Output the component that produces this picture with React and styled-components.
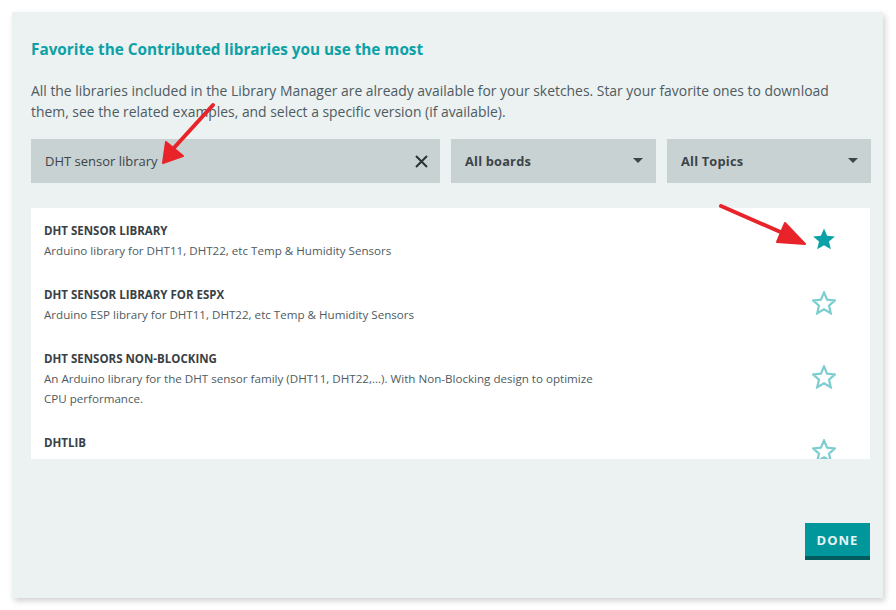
import React from "react"
import styled, { createGlobalStyle } from "styled-components"

const GlobalStyle = createGlobalStyle`
  html, body {
    margin: 0;
    padding: 0;
    background: #ffffff;
    font-family: "Open Sans", "Liberation Sans", sans-serif;
  }
`

const libs = [
  { name: "DHT sensor library", desc: "Arduino library for DHT11, DHT22, etc Temp & Humidity Sensors", fav: true },
  { name: "DHT sensor library for ESPx", desc: "Arduino ESP library for DHT11, DHT22, etc Temp & Humidity Sensors" },
  { name: "DHT sensors Non-Blocking", desc: "An Arduino library for the DHT sensor family (DHT11, DHT22,...). With Non-Blocking design to optimize CPU performance." },
  { name: "DHTlib", desc: "AVR Optimized Library for DHT Temperature & Humidity Sensor on AVR only." },
]

function Star({ filled }) {
  return (
    <StarIcon width="24" height="24" viewBox="0 0 24 24">
      <path
        d="M12 1.5l3.1 7.2 7.8.7-5.9 5.2 1.8 7.7L12 18.2l-6.8 4.1 1.8-7.7L1.1 9.4l7.8-.7z"
        fill={filled ? "#0CA1A6" : "none"}
        stroke={filled ? "none" : "#7ECDD0"}
        strokeWidth="2.2"
        strokeLinejoin="miter"
      />
    </StarIcon>
  )
}

function Caret() {
  return (
    <svg width="10" height="6" viewBox="0 0 10 6">
      <path d="M0 0h10L5 5z" fill="#3b4448" />
    </svg>
  )
}

export default function App() {
  return (
    <>
      <GlobalStyle />
      <Page>
        <Dialog>
          <Title>Favorite the Contributed libraries you use the most</Title>
          <Intro>
            All the libraries included in the Library Manager are already available for your sketches. Star your favorite ones to download
            them, see the related examples, and select a specific version (if available).
          </Intro>
          <Filters>
            <SearchBox>
              <span>DHT sensor library</span>
              <svg width="13" height="13" viewBox="0 0 13 13">
                <path d="M1 1l11 11M12 1L1 12" stroke="#2b3236" strokeWidth="2" />
              </svg>
            </SearchBox>
            <Select>
              <span>All boards</span>
              <Caret />
            </Select>
            <Select>
              <span>All Topics</span>
              <Caret />
            </Select>
          </Filters>
          <List>
            {libs.map((l) => (
              <Item key={l.name}>
                <ItemText>
                  <ItemName>{l.name}</ItemName>
                  <ItemDesc>{l.desc}</ItemDesc>
                </ItemText>
                <Star filled={l.fav} />
              </Item>
            ))}
          </List>
          <Footer>
            <DoneButton>DONE</DoneButton>
          </Footer>
        </Dialog>
        <Arrows width="896" height="610" viewBox="0 0 896 610">
          <path d="M213 105L172 150" stroke="#E8232A" strokeWidth="4" strokeLinecap="round" />
          <path d="M163 163L166 142L183 156z" fill="#E8232A" stroke="#E8232A" strokeWidth="2" strokeLinejoin="round" />
          <path d="M721 206L785 234" stroke="#E8232A" strokeWidth="4" strokeLinecap="round" />
          <path d="M805 244L785 223L777 242z" fill="#E8232A" stroke="#E8232A" strokeWidth="2" strokeLinejoin="round" />
        </Arrows>
      </Page>
    </>
  )
}

const Page = styled.div`
  position: relative;
  width: 896px;
  height: 610px;
  padding: 12px 0 0 12px;
  box-sizing: border-box;
`
const Dialog = styled.div`
  width: 871px;
  height: 586px;
  box-sizing: border-box;
  background: #ECF1F1;
  padding: 0 13px 0 19px;
  display: flex;
  flex-direction: column;
  box-shadow: 2px 3px 6px rgba(0, 0, 0, 0.18);
`
const Title = styled.h1`
  margin: 0;
  padding-top: 26px;
  font-size: 15.3px;
  line-height: 22px;
  font-weight: 700;
  color: #0CA1A6;
`
const Intro = styled.p`
  margin: 20px 0 0;
  max-width: 810px;
  font-size: 13.9px;
  line-height: 21px;
  color: #4E5B61;
`
const Filters = styled.div`
  display: grid;
  grid-template-columns: 409px 205px 204px;
  column-gap: 11px;
  margin-top: 17px;
  height: 44px;
`
const Field = styled.div`
  background: #C9D2D3;
  display: flex;
  align-items: center;
  justify-content: space-between;
  font-size: 13px;
  color: #3b4448;
`
const SearchBox = styled(Field)`
  padding: 0 12px 0 14px;
`
const Select = styled(Field)`
  padding: 0 13px 0 14px;
  font-weight: 700;
  font-size: 12.8px;
  letter-spacing: 0.2px;
`
const List = styled.div`
  margin-top: 25px;
  height: 251px;
  padding-top: 1px;
  box-sizing: border-box;
  background: #ffffff;
  overflow: hidden;
`
const Item = styled.div`
  display: flex;
  align-items: center;
  justify-content: space-between;
  padding: 12px 34px 12px 13px;
`
const ItemText = styled.div`
  max-width: 565px;
`
const ItemName = styled.div`
  font-size: 11.5px;
  line-height: 20px;
  font-weight: 700;
  text-transform: uppercase;
  color: #374146;
`
const ItemDesc = styled.div`
  font-size: 11.6px;
  line-height: 20px;
  color: #4E5B61;
`
const StarIcon = styled.svg`
  flex-shrink: 0;
  margin-bottom: 5px;
`
const Footer = styled.div`
  display: flex;
  justify-content: flex-end;
  margin-top: 64px;
`
const DoneButton = styled.button`
  width: 65px;
  height: 37px;
  border: none;
  border-bottom: 4px solid #005C5F;
  background: #00979C;
  color: #E6F4F4;
  font-family: "Open Sans", "Liberation Sans", sans-serif;
  font-size: 13px;
  font-weight: 700;
  letter-spacing: 1px;
  padding: 0;
`
const Arrows = styled.svg`
  position: absolute;
  left: 0;
  top: 0;
  pointer-events: none;
`
